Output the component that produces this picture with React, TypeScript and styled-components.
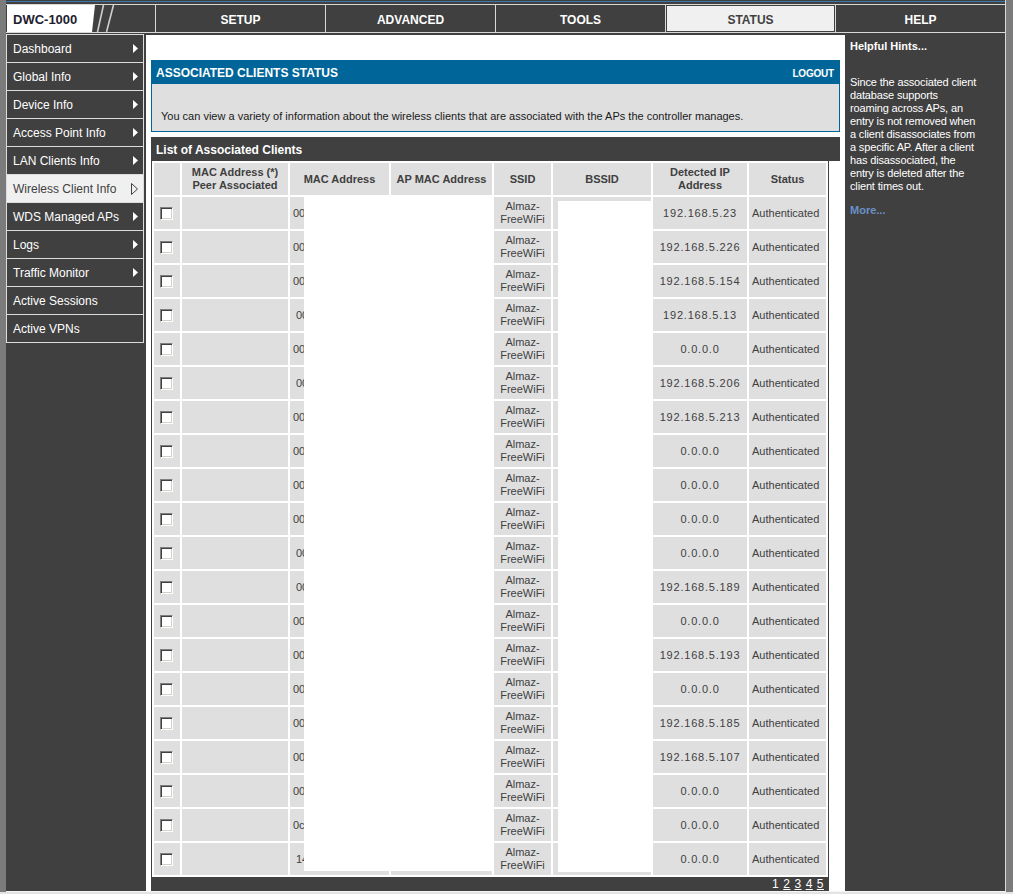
import React from "react";
import styled, { createGlobalStyle } from "styled-components";

const GlobalStyle = createGlobalStyle`
  html, body { margin: 0; padding: 0; background: #7b7b7b; }
  body { font-family: "Liberation Sans", Arial, sans-serif; }
  * { box-sizing: border-box; }
`;

const Page = styled.div`
  padding-left: 6px;
  width: 1013px;
`;

const Frame = styled.div`
  width: 1000px;
  background: #404040;
  border-right: 1px solid #d8d8d8;
  border-bottom: 1px solid #f4f4f4;
`;

const TopStripe = styled.div`
  height: 4px;
  background: linear-gradient(#404040 0 1px, #3d76ad 1px 2px, #404040 2px);
`;

const Header = styled.div`
  display: flex;
  height: 29px;
  border-top: 1px solid #d8d8d8;
  border-bottom: 1px solid #d8d8d8;
`;

const LogoCell = styled.div`
  flex: 0 0 149px;
  height: 27px;
  display: flex;
`;

const Tab = styled.div<{ $active?: boolean }>`
  flex: 0 0 170px;
  border-left: 1px solid #d8d8d8;
  display: flex;
  align-items: center;
  justify-content: center;
  padding-top: 2px;
  font-weight: bold;
  font-size: 12px;
  color: ${(p) => (p.$active ? "#404040" : "#ffffff")};
  background: ${(p) => (p.$active ? "#f0f0f0" : "transparent")};
  box-shadow: ${(p) => (p.$active ? "inset 0 0 0 1px #404040" : "none")};
`;

const Body = styled.div`
  display: grid;
  grid-template-columns: 140px 699px 160px;
  margin-top: 1px;
`;

const Sidebar = styled.nav`
  display: flex;
  flex-direction: column;
`;

const MenuList = styled.div`
  width: 138px;
  border-top: 1px solid #dcdcdc;
`;

const MenuItem = styled.div<{ $active?: boolean }>`
  height: 28px;
  border-left: 1px solid #dcdcdc;
  border-right: 1px solid #dcdcdc;
  border-bottom: 1px solid #dcdcdc;
  padding: 0 5px 0 6px;
  display: flex;
  align-items: center;
  justify-content: space-between;
  font-size: 12px;
  color: ${(p) => (p.$active ? "#404040" : "#ffffff")};
  background: ${(p) => (p.$active ? "#f0f0f0" : "#404040")};
  white-space: nowrap;
`;

const Content = styled.main`
  background: #ffffff;
  margin-top: 1px;
  padding: 25px 5px 0 5px;
`;

const PanelHead = styled.div`
  height: 24px;
  background: #006699;
  display: flex;
  align-items: center;
  justify-content: space-between;
  padding: 2px 6px 0 5px;
  color: #ffffff;
  font-weight: bold;
`;

const PanelTitle = styled.span`
  font-size: 12px;
`;

const Logout = styled.span`
  font-size: 10px;
  letter-spacing: -0.2px;
`;

const DescBox = styled.div`
  height: 48px;
  background: #dfdfdf;
  border: 1px solid #006699;
  border-top: none;
  padding: 26px 10px 0 9px;
  font-size: 11px;
  line-height: 13px;
  color: #1a1a1a;
  white-space: nowrap;
`;

const ListBar = styled.div`
  margin-top: 5px;
  height: 24px;
  background: #404040;
  color: #ffffff;
  font-weight: bold;
  font-size: 12px;
  display: flex;
  align-items: center;
  padding: 2px 0 0 5px;
`;

const TableWrap = styled.div`
  position: relative;
  width: 678px;
  border-left: 1px solid #404040;
  border-right: 1px solid #404040;
  background: #ffffff;
`;

const Table = styled.table`
  border-collapse: separate;
  border-spacing: 2px;
  table-layout: fixed;
  width: 676px;
`;

const Th = styled.th`
  background: #dfdfdf;
  height: 32px;
  padding: 0 2px;
  font-weight: bold;
  font-size: 11px;
  line-height: 13px;
  color: #404040;
  text-align: center;
  vertical-align: middle;
`;

const Td = styled.td<{ $align?: string; $pad?: number; $ls?: number }>`
  background: #dfdfdf;
  height: 32px;
  padding: 0 3px 0 ${(p) => (p.$pad ?? 3)}px;
  font-size: 11px;
  line-height: 13px;
  color: #404040;
  text-align: ${(p) => p.$align ?? "left"};
  vertical-align: middle;
  letter-spacing: ${(p) => (p.$ls ?? 0)}px;
  white-space: ${(p) => (p.$align === "center" ? "normal" : "nowrap")};
  overflow: hidden;
`;

const Check = styled.span`
  display: inline-block;
  width: 13px;
  height: 13px;
  margin-left: -2px;
  background: #ffffff;
  border-style: solid;
  border-width: 1px;
  border-color: #808080 #ffffff #ffffff #808080;
  box-shadow: inset 1px 1px 0 #404040, inset -1px -1px 0 #d4d0c8;
  vertical-align: middle;
`;

const Redact = styled.div`
  position: absolute;
  background: #ffffff;
`;

const Pager = styled.div`
  width: 678px;
  height: 14px;
  background: #404040;
  color: #ffffff;
  font-size: 12px;
  line-height: 14px;
  text-align: right;
  padding-right: 5px;
  letter-spacing: 0.5px;
`;

const PageLink = styled.span<{ $link?: boolean }>`
  text-decoration: ${(p) => (p.$link ? "underline" : "none")};
  margin-left: 4px;
`;

const Hints = styled.aside`
  padding: 6px 5px 0 5px;
  color: #ffffff;
  font-size: 11px;
  line-height: 13px;
`;

const HintsTitle = styled.div`
  font-weight: bold;
`;

const HintsText = styled.div`
  margin-top: 23px;
  white-space: nowrap;
  letter-spacing: -0.15px;
`;

const More = styled.div`
  margin-top: 11px;
  font-weight: bold;
  color: #6a90c8;
`;

const Footer = styled.div`
  height: 12px;
  background: #e4e4e4;
  margin-left: -6px;
  width: 1013px;
`;

const Arrow = ({ active }: { active?: boolean }) =>
  active ? (
    <svg width="7" height="12" viewBox="0 0 7 12">
      <path d="M0.5 0.5 L6.5 6 L0.5 11.5 Z" fill="none" stroke="#404040" strokeWidth="1" />
    </svg>
  ) : (
    <svg width="5" height="9" viewBox="0 0 5 9">
      <path d="M0 0 L5 4.5 L0 9 Z" fill="#ffffff" />
    </svg>
  );

const Logo = () => (
  <svg width="149" height="27" viewBox="0 0 149 27">
    <polygon points="1,0 89,0 86,27 1,27" fill="#ffffff" />
    <line x1="97.5" y1="0" x2="91.5" y2="27" stroke="#cfcfcf" strokeWidth="1.6" />
    <line x1="107.5" y1="0" x2="100.5" y2="27" stroke="#cfcfcf" strokeWidth="1.6" />
    <text
      x="7"
      y="18.5"
      fontFamily="'Liberation Sans', Arial, sans-serif"
      fontWeight="bold"
      fontSize="13"
      fill="#1e1e30"
    >
      DWC-1000
    </text>
  </svg>
);

const tabs = ["SETUP", "ADVANCED", "TOOLS", "STATUS", "HELP"];

const menu: { label: string; arrow: boolean; active?: boolean }[] = [
  { label: "Dashboard", arrow: true },
  { label: "Global Info", arrow: true },
  { label: "Device Info", arrow: true },
  { label: "Access Point Info", arrow: true },
  { label: "LAN Clients Info", arrow: true },
  { label: "Wireless Client Info", arrow: true, active: true },
  { label: "WDS Managed APs", arrow: true },
  { label: "Logs", arrow: true },
  { label: "Traffic Monitor", arrow: true },
  { label: "Active Sessions", arrow: false },
  { label: "Active VPNs", arrow: false },
];

const ips = [
  "192.168.5.23",
  "192.168.5.226",
  "192.168.5.154",
  "192.168.5.13",
  "0.0.0.0",
  "192.168.5.206",
  "192.168.5.213",
  "0.0.0.0",
  "0.0.0.0",
  "0.0.0.0",
  "0.0.0.0",
  "192.168.5.189",
  "0.0.0.0",
  "192.168.5.193",
  "0.0.0.0",
  "192.168.5.185",
  "192.168.5.107",
  "0.0.0.0",
  "0.0.0.0",
  "0.0.0.0",
];

const macs = ["00", "00", "00", "00", "00", "00", "00", "00", "00", "00", "00", "00", "00", "00", "00", "00", "00", "00", "0c", "14"];
const shifted = new Set([3, 5, 10, 11, 19]);

const cols = [26, 106, 99, 101, 57, 98, 94, 77];

export default function App() {
  return (
    <>
      <GlobalStyle />
      <Page>
        <Frame>
          <TopStripe />
          <Header>
            <LogoCell>
              <Logo />
            </LogoCell>
            {tabs.map((t) => (
              <Tab key={t} $active={t === "STATUS"}>
                {t}
              </Tab>
            ))}
          </Header>
          <Body>
            <Sidebar>
              <MenuList>
                {menu.map((m) => (
                  <MenuItem key={m.label} $active={m.active}>
                    <span>{m.label}</span>
                    {m.arrow && <Arrow active={m.active} />}
                  </MenuItem>
                ))}
              </MenuList>
            </Sidebar>
            <Content>
              <PanelHead>
                <PanelTitle>ASSOCIATED CLIENTS STATUS</PanelTitle>
                <Logout>LOGOUT</Logout>
              </PanelHead>
              <DescBox>
                You can view a variety of information about the wireless clients that are associated with the APs the controller manages.
              </DescBox>
              <ListBar>List of Associated Clients</ListBar>
              <TableWrap>
                <Table>
                  <colgroup>
                    {cols.map((w, i) => (
                      <col key={i} style={{ width: w }} />
                    ))}
                  </colgroup>
                  <thead>
                    <tr>
                      <Th />
                      <Th>
                        MAC Address (*)
                        <br />
                        Peer Associated
                      </Th>
                      <Th>MAC Address</Th>
                      <Th>AP MAC Address</Th>
                      <Th>SSID</Th>
                      <Th>BSSID</Th>
                      <Th>
                        Detected IP
                        <br />
                        Address
                      </Th>
                      <Th>Status</Th>
                    </tr>
                  </thead>
                  <tbody>
                    {ips.map((ip, i) => (
                      <tr key={i}>
                        <Td $align="center">
                          <Check />
                        </Td>
                        <Td />
                        <Td $pad={shifted.has(i) ? 6 : 3}>{macs[i]}</Td>
                        <Td />
                        <Td $align="center">Almaz-FreeWiFi</Td>
                        <Td />
                        <Td $align="center" $ls={0.8}>
                          {ip}
                        </Td>
                        <Td>Authenticated</Td>
                      </tr>
                    ))}
                  </tbody>
                </Table>
                <Redact style={{ left: 152, top: 36, width: 188, height: 674 }} />
                <Redact style={{ left: 406, top: 40, width: 94, height: 671 }} />
              </TableWrap>
              <Pager>
                <PageLink>1</PageLink>
                <PageLink $link>2</PageLink>
                <PageLink $link>3</PageLink>
                <PageLink $link>4</PageLink>
                <PageLink $link>5</PageLink>
              </Pager>
            </Content>
            <Hints>
              <HintsTitle>Helpful Hints...</HintsTitle>
              <HintsText>
                Since the associated client
                <br />
                database supports
                <br />
                roaming across APs, an
                <br />
                entry is not removed when
                <br />
                a client disassociates from
                <br />
                a specific AP. After a client
                <br />
                has disassociated, the
                <br />
                entry is deleted after the
                <br />
                client times out.
              </HintsText>
              <More>More...</More>
            </Hints>
          </Body>
        </Frame>
        <Footer />
      </Page>
    </>
  );
}
